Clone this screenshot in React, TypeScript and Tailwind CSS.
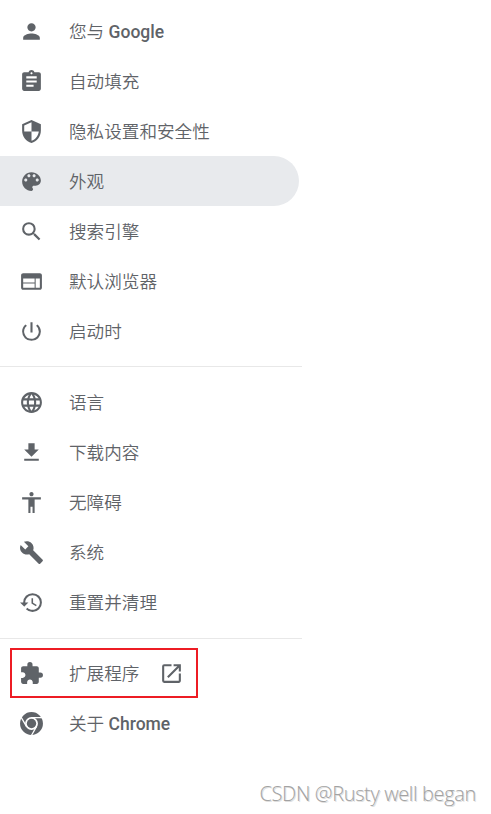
import React from "react";
import type { IconType } from "react-icons";
import {
  MdAccessibility,
  MdAssignment,
  MdBuild,
  MdColorLens,
  MdExtension,
  MdFileDownload,
  MdHistory,
  MdLanguage,
  MdOpenInNew,
  MdPerson,
  MdPowerSettingsNew,
  MdSearch,
  MdSecurity,
  MdWeb,
} from "react-icons/md";

type IconProps = { className?: string };

interface Item {
  label: string;
  latin?: string;
  icon: IconType | React.FC<IconProps>;
  active?: boolean;
  external?: boolean;
}

const groups: Item[][] = [
  [
    { label: "您与", latin: "Google", icon: MdPerson },
    { label: "自动填充", icon: MdAssignment },
    { label: "隐私设置和安全性", icon: MdSecurity },
    { label: "外观", icon: PaletteIcon, active: true },
    { label: "搜索引擎", icon: MdSearch },
    { label: "默认浏览器", icon: MdWeb },
    { label: "启动时", icon: MdPowerSettingsNew },
  ],
  [
    { label: "语言", icon: MdLanguage },
    { label: "下载内容", icon: MdFileDownload },
    { label: "无障碍", icon: MdAccessibility },
    { label: "系统", icon: MdBuild },
    { label: "重置并清理", icon: MdHistory },
  ],
  [
    { label: "扩展程序", icon: MdExtension, external: true },
    { label: "关于", latin: "Chrome", icon: ChromeIcon },
  ],
];

export default function App() {
  return (
    <div className="flex h-[814px] w-[491px] flex-col overflow-hidden bg-white pt-[6px] text-[#5f6368]">
      <nav className="w-[302px]">
        {groups.map((items, i) => (
          <div key={i}>
            {i === 1 && <hr className="my-[10px] h-px border-0 bg-[#e8e8e8]" />}
            {i === 2 && <hr className="mt-[11px] mb-[9px] h-px border-0 bg-[#e8e8e8]" />}
            {items.map((item) => (
              <MenuItem key={item.label} item={item} />
            ))}
          </div>
        ))}
      </nav>
      <p className="mt-auto mr-[15px] mb-[6px] text-right font-['Open_Sans',sans-serif] text-[20px] leading-[28px] font-[350] tracking-[-0.35px] text-[#a2a2a2] [text-shadow:1px_1px_0_#dedede]">
        CSDN @Rusty well began
      </p>
    </div>
  );
}

function MenuItem({ item }: { item: Item }) {
  const Icon = item.icon;
  return (
    <a
      className={`relative flex h-[50px] w-[299px] items-center rounded-r-full pl-[19px] ${
        item.active ? "bg-[#e8eaed]" : ""
      }`}
    >
      <Icon className="size-[25px] shrink-0" />
      <span className="ml-[25px] pt-[2px] font-[Roboto,'Noto_Sans_CJK_SC',sans-serif] text-[17.6px] leading-[26px] font-[350] whitespace-pre">
        {item.label}
        {item.latin && <span className="text-[17.5px] font-medium"> {item.latin}</span>}
      </span>
      {item.external && (
        <>
          <MdOpenInNew className="ml-[20px] size-[25px] shrink-0" />
          {/* highlight frame around the extensions entry */}
          <span className="absolute inset-y-0 left-[10px] w-[188px] border-2 border-[#ed1c24]" />
        </>
      )}
    </a>
  );
}

function PaletteIcon({ className }: IconProps) {
  return (
    <svg viewBox="0 0 24 24" className={className} fill="currentColor">
      <path d="M12 3c-4.97 0-9 4.03-9 9s4.03 9 9 9c.83 0 1.5-.67 1.5-1.5 0-.39-.15-.74-.39-1.01-.23-.26-.38-.61-.38-.99 0-.83.67-1.5 1.5-1.5H16c2.76 0 5-2.24 5-5 0-4.42-4.03-8-9-8zm-5.500 9c-.83 0-1.500-.67-1.500-1.500S5.670 9 6.500 9 8 9.670 8 10.500 7.330 12 6.500 12zm3-4C8.670 8 8 7.330 8 6.500S8.670 5 9.500 5s1.500.67 1.500 1.500S10.330 8 9.500 8zm5 0c-.83 0-1.500-.67-1.500-1.500S13.670 5 14.500 5s1.500.67 1.500 1.500S15.330 8 14.500 8zm3 4c-.83 0-1.500-.67-1.500-1.500S16.670 9 17.500 9s1.500.67 1.500 1.500-.67 1.500-1.500 1.500z" />
    </svg>
  );
}

function ChromeIcon({ className }: IconProps) {
  return (
    <svg viewBox="0 0 24 24" className={className} fill="none">
      <circle cx="12" cy="12" r="8.6" stroke="currentColor" strokeWidth="4.8" />
      <circle cx="12" cy="12" r="4.5" fill="currentColor" />
      <path d="M12 6.3h11M7.1 14.8 1.7 5.4M16.9 14.8l-5.4 9.4" stroke="white" strokeWidth="1.2" />
    </svg>
  );
}
